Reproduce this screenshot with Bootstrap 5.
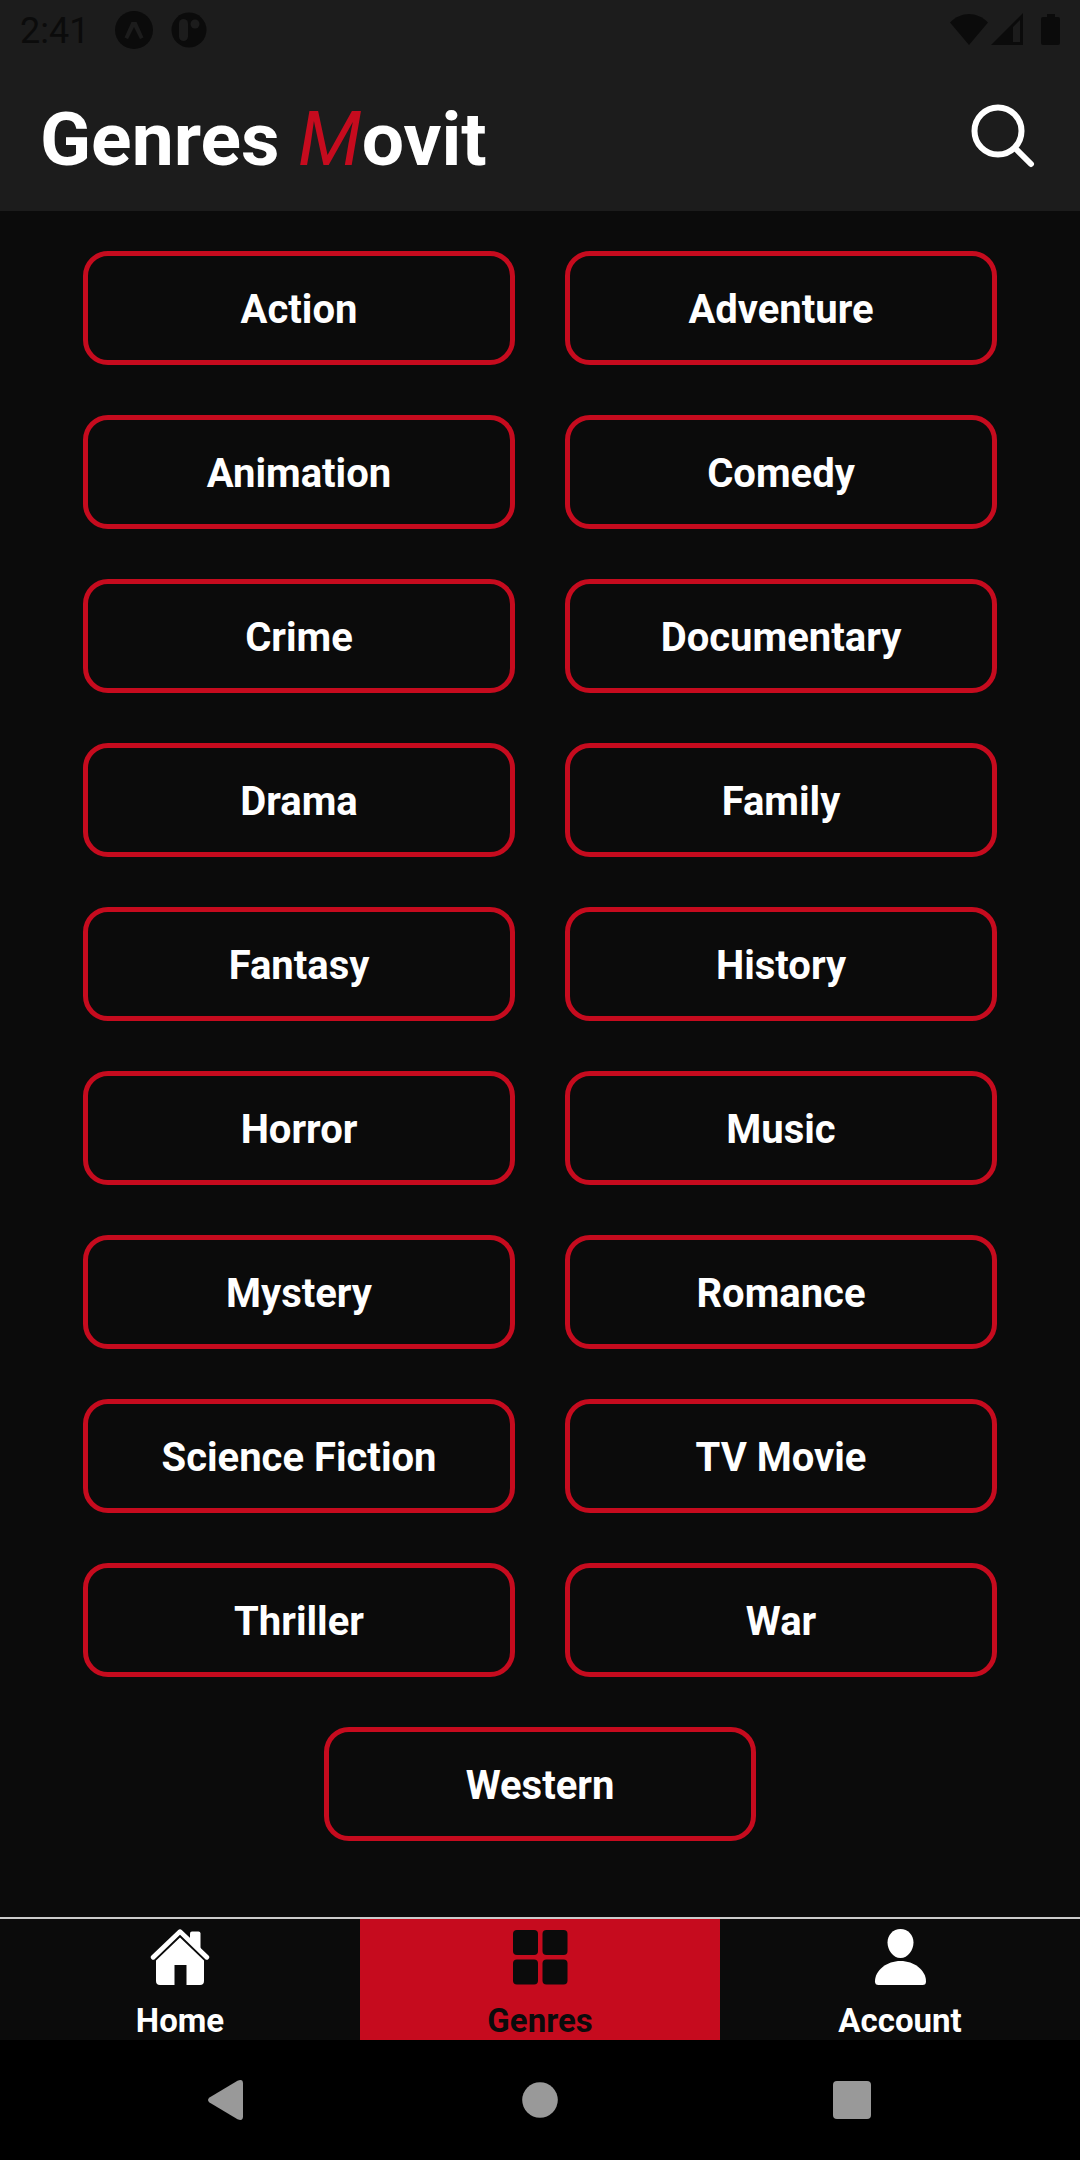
<!DOCTYPE html>
<html lang="en">
<head>
<meta charset="utf-8">
<meta name="viewport" content="width=device-width, initial-scale=1">
<title>Genres Movit</title>
<link href="https://cdn.jsdelivr.net/npm/bootstrap@5.3.0/dist/css/bootstrap.min.css" rel="stylesheet">
<style>
  :root { --ink: #0b0b0b; --panel: #1c1c1c; --brand: #c60b1e; }
  body { background: var(--ink); font-family: Roboto, "Liberation Sans", sans-serif; color: #fff; }
  svg { display: block; flex: none; }
  .app-top { background: var(--panel); }
  .status-bar { height: 60px; padding: 0 20px; color: var(--ink); font-size: 36px; line-height: 60px; }
  .status-bar svg { fill: currentColor; }
  .clock { margin-right: 25px; padding-top: 2px; }
  .title-bar { height: 151px; padding: 0 40px; }
  .title-bar h1 { padding-top: 6px; font-size: 75px; line-height: 88px; font-weight: 700; }
  .title-bar em { color: var(--brand); font-weight: 400; }
  .genre-list { padding: 15px 0; }
  .genre-btn { width: 40%; margin: 25px; padding: 30px 8px 26px; border: 5px solid var(--brand); border-radius: 25px;
    color: #fff; font-size: 40px; line-height: 48px; font-weight: 700; }
  .genre-btn:hover { background: var(--brand); color: var(--ink); }
  .tab-bar { border-top: 2px solid #ccc; }
  .tab-link { color: #fff; padding-top: 8px; font-size: 33px; line-height: 38px; font-weight: 700; text-decoration: none; }
  .tab-link svg { fill: currentColor; margin-bottom: 15px; }
  .tab-link.active { background: var(--brand); color: var(--ink); }
  .system-bar { background: #000; height: 120px; padding: 0 72px; }
  .system-bar svg { fill: #999; }
</style>
</head>
<body class="d-flex flex-column min-vh-100">
<header class="app-top">
  <div class="status-bar d-flex align-items-center justify-content-between">
    <div class="d-flex align-items-center">
      <span class="clock">2:41</span>
      <svg width="94" height="40" viewBox="0 0 94 40" aria-hidden="true">
        <circle cx="20" cy="20" r="19"/>
        <path d="M10.500 27.500 17.500 12h5l7 15.500-3.500 1.500L20 17l-6 12z" fill="#1c1c1c"/>
        <circle cx="75" cy="20" r="17.500"/>
        <rect x="65" y="9" width="9" height="22" rx="4.500" fill="#1c1c1c"/>
        <circle cx="81" cy="14" r="4.500" fill="#1c1c1c"/>
      </svg>
    </div>
    <svg width="110" height="34" viewBox="0 0 110 34" aria-hidden="true">
      <path d="M0 9.500C11-2 27-2 38 9.500L19 32z"/>
      <path d="M41 32 73 0v32zM63 29h7V7l-7 7z" fill-rule="evenodd"/>
      <path d="M97 1h8v3h3a2 2 0 0 1 2 2v24a2 2 0 0 1-2 2H93a2 2 0 0 1-2-2V6a2 2 0 0 1 2-2h4z"/>
    </svg>
  </div>
  <div class="title-bar d-flex align-items-center justify-content-between">
    <h1 class="m-0">Genres <em>M</em>ovit</h1>
    <button class="btn p-0 border-0" type="button" aria-label="Search">
      <svg width="70" height="70" viewBox="0 0 70 70" fill="none" stroke="#fff" stroke-width="6" stroke-linecap="round">
        <circle cx="28" cy="30" r="23.500"/><path d="m45 47 16 16"/>
      </svg>
    </button>
  </div>
</header>
<main class="genre-list d-flex flex-wrap justify-content-center align-content-start flex-grow-1">
  <button type="button" class="btn genre-btn">Action</button>
  <button type="button" class="btn genre-btn">Adventure</button>
  <button type="button" class="btn genre-btn">Animation</button>
  <button type="button" class="btn genre-btn">Comedy</button>
  <button type="button" class="btn genre-btn">Crime</button>
  <button type="button" class="btn genre-btn">Documentary</button>
  <button type="button" class="btn genre-btn">Drama</button>
  <button type="button" class="btn genre-btn">Family</button>
  <button type="button" class="btn genre-btn">Fantasy</button>
  <button type="button" class="btn genre-btn">History</button>
  <button type="button" class="btn genre-btn">Horror</button>
  <button type="button" class="btn genre-btn">Music</button>
  <button type="button" class="btn genre-btn">Mystery</button>
  <button type="button" class="btn genre-btn">Romance</button>
  <button type="button" class="btn genre-btn">Science Fiction</button>
  <button type="button" class="btn genre-btn">TV Movie</button>
  <button type="button" class="btn genre-btn">Thriller</button>
  <button type="button" class="btn genre-btn">War</button>
  <button type="button" class="btn genre-btn">Western</button>
</main>
<nav class="tab-bar row g-0" aria-label="Main">
  <a href="#home" class="tab-link col d-flex flex-column align-items-center">
    <svg width="60" height="60" viewBox="0 0 60 60" aria-hidden="true">
      <path d="M30 10.500 54 33.500V54a4 4 0 0 1-4 4H36.500V38h-12v20H10a4 4 0 0 1-4-4V33.500z"/>
      <path d="M40 13V6.500a2 2 0 0 1 2-2h6.500a2 2 0 0 1 2 2V23z"/>
      <path d="M1.500 28.500 28 3.200q2-1.800 4 0l26.500 25.300a2.400 2.400 0 0 1-3.400 3.400L30 7.800 4.900 31.900a2.400 2.400 0 0 1-3.400-3.400z"/>
    </svg>
    <span>Home</span>
  </a>
  <a href="#genres" class="tab-link active col d-flex flex-column align-items-center" aria-current="page">
    <svg width="60" height="60" viewBox="0 0 60 60" aria-hidden="true">
      <rect x="3" y="3" width="25" height="25" rx="4"/><rect x="32.500" y="3" width="25" height="25" rx="4"/>
      <rect x="3" y="32.500" width="25" height="25" rx="4"/><rect x="32.500" y="32.500" width="25" height="25" rx="4"/>
    </svg>
    <span>Genres</span>
  </a>
  <a href="#account" class="tab-link col d-flex flex-column align-items-center">
    <svg width="60" height="60" viewBox="0 0 60 60" aria-hidden="true">
      <path d="M30.500 2C38 2 43.500 8 43.500 15.500S38 31 30.500 31 17.500 23 17.500 15.500 23 2 30.500 2z"/>
      <path d="M30.500 34C44 34 56 43 56 54.500q0 3.500-3.500 3.500h-44Q5 58 5 54.500C5 43 17 34 30.500 34z"/>
    </svg>
    <span>Account</span>
  </a>
</nav>
<footer class="system-bar d-flex align-items-center">
  <button type="button" class="btn p-0 border-0 flex-fill d-flex justify-content-center" aria-label="Back">
    <svg width="40" height="40" viewBox="0 0 40 40"><path d="M1.500 17.500 29.500.8Q35 -1.500 35 3.500v33q0 5-5.500 2.700L1.500 22.500q-3-2.500 0-5z"/></svg>
  </button>
  <button type="button" class="btn p-0 border-0 flex-fill d-flex justify-content-center" aria-label="Home screen">
    <svg width="40" height="40" viewBox="0 0 40 40"><circle cx="20" cy="20" r="17.800"/></svg>
  </button>
  <button type="button" class="btn p-0 border-0 flex-fill d-flex justify-content-center" aria-label="Recent apps">
    <svg width="40" height="40" viewBox="0 0 40 40"><rect x="1" y="1" width="38" height="38" rx="4"/></svg>
  </button>
</footer>
<script src="https://cdn.jsdelivr.net/npm/bootstrap@5.3.0/dist/js/bootstrap.bundle.min.js"></script>
</body>
</html>
